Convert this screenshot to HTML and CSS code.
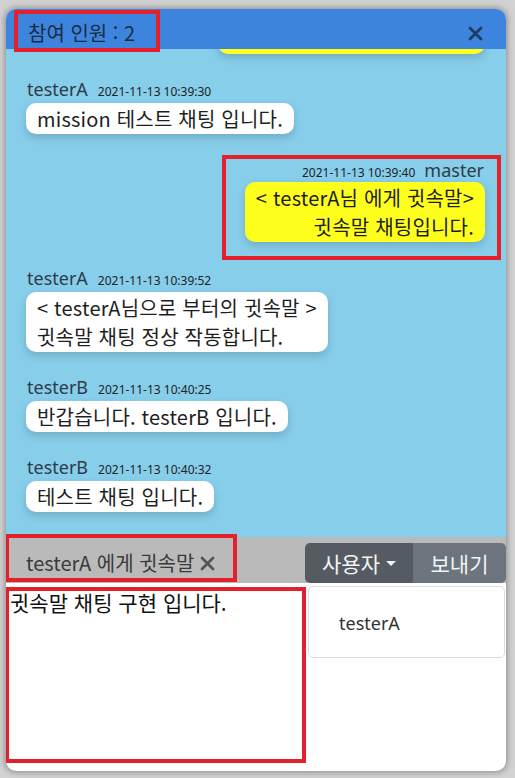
FILE: index.html
```html
<!DOCTYPE html>
<html lang="ko">
<head>
<meta charset="utf-8">
<title>채팅</title>
<link rel="stylesheet" href="styles.css">
</head>
<body>
<div class="window">
  <header class="head">
    <div class="title mark">참여 인원 : 2</div>
    <button class="close" aria-label="닫기">
      <svg width="15" height="15" viewBox="0 0 15 15"><path d="M2 2 L13 13 M13 2 L2 13" stroke="#1f3a5c" stroke-width="2.8" stroke-linecap="round"/></svg>
    </button>
  </header>
  <div class="chat">
    <div class="msg mine partial"><div class="bubble yellow stub"></div></div>

    <div class="msg">
      <div class="meta"><span class="name">testerA</span><span class="time">2021-11-13 10:39:30</span></div>
      <div class="bubble">mission 테스트 채팅 입니다.</div>
    </div>

    <div class="msg mine boxed">
      <div class="meta"><span class="time">2021-11-13 10:39:40</span><span class="name">master</span></div>
      <div class="bubble yellow">&lt; testerA님 에게 귓속말&gt;<br>귓속말 채팅입니다.</div>
    </div>

    <div class="msg">
      <div class="meta"><span class="name">testerA</span><span class="time">2021-11-13 10:39:52</span></div>
      <div class="bubble">&lt; testerA님으로 부터의 귓속말 &gt;<br>귓속말 채팅 정상 작동합니다.</div>
    </div>

    <div class="msg">
      <div class="meta"><span class="name">testerB</span><span class="time">2021-11-13 10:40:25</span></div>
      <div class="bubble">반갑습니다. testerB 입니다.</div>
    </div>

    <div class="msg">
      <div class="meta"><span class="name">testerB</span><span class="time">2021-11-13 10:40:32</span></div>
      <div class="bubble">테스트 채팅 입니다.</div>
    </div>
  </div>
  <div class="bar">
    <div class="target mark">testerA 에게 귓속말<svg class="x" width="15" height="15" viewBox="0 0 15 15"><path d="M2 2 L13 13 M13 2 L2 13" stroke="#555" stroke-width="2.8" stroke-linecap="round"/></svg></div>
    <div class="btns">
      <button class="btn user">사용자<span class="caret"></span></button>
      <button class="btn send">보내기</button>
    </div>
  </div>
  <div class="bottom">
    <div class="input mark">귓속말 채팅 구현 입니다.</div>
    <div class="menu"><div class="item">testerA</div></div>
  </div>
</div>
</body>
</html>
```
FILE: styles.css
```css
* { box-sizing: border-box; }
html, body { margin: 0; padding: 0; }
body {
  background: #d2d2d2;
  font-family: "Noto Sans", "Noto Sans CJK KR", sans-serif;
  width: 515px;
  height: 778px;
  overflow: hidden;
}
.window {
  margin: 9px 9px 0 6px;
  width: 500px;
  height: 762px;
  border-radius: 10px;
  overflow: hidden;
  background: #fff;
  box-shadow: 0 0 6px 1px rgba(0,0,0,0.35);
  display: flex;
  flex-direction: column;
}
.mark { border: 4px solid #e3202b; }
.head {
  position: relative;
  z-index: 2;
  height: 40px;
  flex: none;
  background: #3d84de;
  display: flex;
  justify-content: space-between;
  align-items: flex-start;
}
.title {
  margin: 1px 0 0 8px;
  width: 146px;
  height: 42px;
  padding: 4px 0 0 10px;
  font-size: 20px;
  line-height: 30px;
  color: #1c2b44;
  font-family: "Noto Sans CJK KR", sans-serif;
}
.close {
  border: 0;
  background: transparent;
  padding: 0;
  margin: 17px 23px 0 0;
  width: 15px;
  height: 15px;
  display: flex;
}
.chat {
  position: relative;
  z-index: 1;
  height: 488px;
  flex: none;
  background: #87ceeb;
  overflow: hidden;
  padding: 0 21px 0 20px;
  display: flex;
  flex-direction: column;
}
.msg {
  display: flex;
  flex-direction: column;
  align-items: flex-start;
  margin-top: 24px;
}
.msg.mine { align-items: flex-end; }
.msg.partial { margin-top: -25px; }
.stub { width: 267px; height: 30px; }
.meta {
  display: flex;
  align-items: baseline;
  gap: 10px;
  height: 22px;
  line-height: 22px;
  margin-bottom: 3px;
  padding: 0 1px;
}
.name { font-size: 18px; color: #2f3b47; }
.time { font-size: 12px; color: #222; }
.bubble {
  background: #fff;
  border-radius: 10px;
  padding: 1px 11px;
  font-size: 20px;
  line-height: 29px;
  letter-spacing: 0.2px;
  color: #1e1e1e;
  box-shadow: 0 4px 8px rgba(0,0,0,0.16);
  font-family: "Noto Sans CJK KR", sans-serif;
}
.bubble.yellow {
  background: #ffff1e;
  text-align: right;
}
.msg.boxed {
  border: 4px solid #e3202b;
  width: 279px;
  margin: 21px -16px -17px auto;
  padding: 0 12px 14px 12px;
}
.msg.boxed .meta { margin-bottom: 1px; gap: 9px; }
.bar {
  height: 46px;
  flex: none;
  background: #bababa;
  display: flex;
  justify-content: space-between;
  align-items: flex-end;
  position: relative;
  z-index: 2;
}
.target {
  align-self: flex-start;
  margin: -3px 0 0 -1px;
  width: 232px;
  height: 48px;
  padding: 10px 0 0 17px;
  font-size: 20px;
  line-height: 30px;
  color: #3a3a3a;
  display: flex;
  align-items: flex-start;
  font-family: "Noto Sans CJK KR", sans-serif;
  white-space: nowrap;
}
.x { margin: 8px 0 0 6px; flex: none; }
.btns { display: flex; height: 40px; }
.btn {
  border: 0;
  height: 40px;
  font-size: 21px;
  color: #f4f4f4;
  font-family: "Noto Sans CJK KR", sans-serif;
  display: flex;
  align-items: center;
  justify-content: center;
  padding: 0;
}
.user {
  width: 108px;
  background: #545b62;
  border-radius: 5px 0 0 5px;
}
.send {
  width: 93px;
  background: #6c757d;
  border-radius: 0 5px 5px 0;
}
.caret {
  width: 0; height: 0;
  border-left: 5px solid transparent;
  border-right: 5px solid transparent;
  border-top: 5px solid #f4f4f4;
  margin-left: 6px;
}
.bottom {
  flex: 1;
  display: flex;
  align-items: flex-start;
  gap: 2px;
  padding-right: 1px;
}
.input {
  margin: 4px 0 0 -1px;
  width: 301px;
  height: 176px;
  padding: 0 0 0 1px;
  font-size: 21px;
  line-height: 22px;
  color: #111;
  font-family: "Noto Sans CJK KR", sans-serif;
}
.menu {
  flex: 1;
  margin-top: 3px;
  height: 72px;
  border: 1px solid #dcdcdc;
  border-radius: 5px;
  background: #fff;
}
.item {
  padding: 23px 30px;
  font-size: 18px;
  line-height: 26px;
  color: #333;
}
```
